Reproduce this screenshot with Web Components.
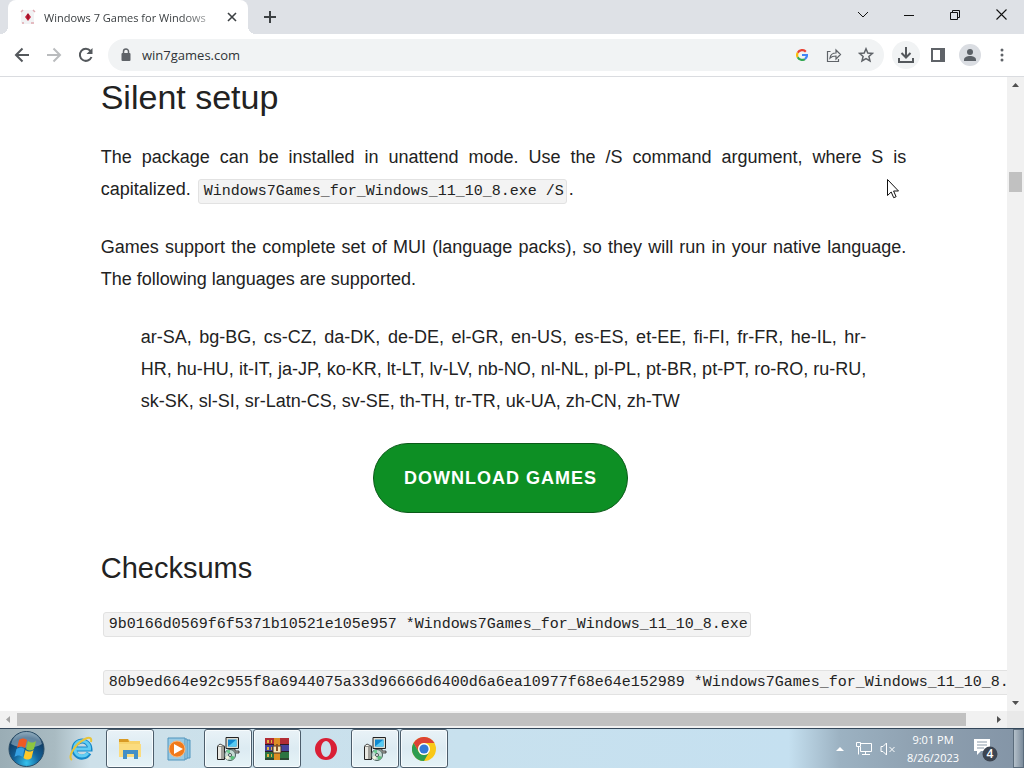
<!DOCTYPE html>
<html lang="en">
<head>
<meta charset="utf-8">
<title>Windows 7 Games for Windows</title>
<style>
html, body { height: 100%; margin: 0; }
body { display: flex; flex-direction: column; overflow: hidden; font-family: "Liberation Sans", Arial, sans-serif; background: #fff; }
</style>
</head>
<body>
<tab-strip></tab-strip>
<browser-toolbar></browser-toolbar>
<page-viewport>
  <article-page></article-page>
</page-viewport>
<desktop-taskbar></desktop-taskbar>
<mouse-pointer></mouse-pointer>

<script>
function define(name, html) {
  const t = document.createElement('template');
  t.innerHTML = html;
  customElements.define(name, class extends HTMLElement {
    constructor() {
      super();
      this.attachShadow({ mode: 'open' }).appendChild(t.content.cloneNode(true));
    }
  });
}

const reset = `
:host, *, *::before, *::after { box-sizing: border-box; }
button { border: 0; padding: 0; margin: 0; background: none; color: inherit; font: inherit; display: grid; place-items: center; }
svg { display: block; }`;

define('tab-strip', `
<style>${reset}
:host { display: flex; flex: none; height: 34px; background: #dee1e6; font: 11px "Open Sans", "Noto Sans", sans-serif; color: #3c4043; padding-left: 8px; }
.tab { display: flex; align-items: center; width: 240px; background: #fff; border-radius: 8px 8px 0 0; padding: 0 8px 0 12px; position: relative; }
.tab::before, .tab::after { content: ""; position: absolute; bottom: 0; width: 8px; height: 8px; }
.tab::before { left: -8px; background: radial-gradient(circle at 0 0, transparent 8px, #fff 8px); }
.tab::after { right: -8px; background: radial-gradient(circle at 100% 0, transparent 8px, #fff 8px); }
.title { flex: 1; margin-left: 8px; white-space: nowrap; overflow: hidden; -webkit-mask-image: linear-gradient(90deg, #000 80%, rgba(0,0,0,.4) 96%); mask-image: linear-gradient(90deg, #000 80%, rgba(0,0,0,.4) 96%); }
.close { width: 16px; height: 16px; margin-left: 8px; }
.new { width: 28px; margin-left: 8px; }
.window { display: flex; margin-left: auto; height: 29px; color: #111; }
.window button { width: 46px; }
</style>
<div class="tab">
  <svg width="16" height="16" viewBox="0 0 16 16"><rect x="1" y="1" width="13" height="14" rx="2" fill="#f1f2f4"/><path d="M1 3l2-2M13 1l2 2M11 14l3 0M2 14l2 0" stroke="#dfa9b0" stroke-width="1.5"/><path d="M8 4l3 4-3 4-3-4z" fill="#c71f37"/><path d="M8 5v5" stroke="#7c0b23"/></svg>
  <span class="title">Windows 7 Games for Windows</span>
  <button class="close" aria-label="Close tab"><svg width="10" height="10" viewBox="0 0 10 10" stroke="#3c4043" stroke-width="1.6"><path d="M1 1l8 8M9 1L1 9"/></svg></button>
</div>
<button class="new" aria-label="New tab"><svg width="14" height="14" viewBox="0 0 14 14" stroke="#3c4043" stroke-width="2"><path d="M7 1v12M1 7h12"/></svg></button>
<div class="window">
  <button aria-label="Search tabs"><svg width="12" height="8" viewBox="0 0 12 8" fill="none" stroke="currentColor"><path d="M1 1l5 5 5-5"/></svg></button>
  <button aria-label="Minimize"><svg width="10" height="10" viewBox="0 0 10 10" stroke="currentColor"><path d="M0 5.500h10"/></svg></button>
  <button aria-label="Restore"><svg width="10" height="10" viewBox="0 0 10 10" fill="none" stroke="currentColor"><path d="M.5 2.500h7v7h-7zM2.500 2.500v-2h7v7h-2"/></svg></button>
  <button aria-label="Close"><svg width="11" height="11" viewBox="0 0 11 11" stroke="currentColor" stroke-width="1.100"><path d="M.5.500l10 10M10.500.500l-10 10"/></svg></button>
</div>`);

define('browser-toolbar', `
<style>${reset}
:host { display: flex; flex: none; align-items: center; height: 43px; padding: 0 6px; background: #fff; border-bottom: 1px solid #dadce0; font: 13px "Open Sans", "Noto Sans", sans-serif; color: #5f6368; }
button { width: 32px; height: 28px; }
.box { flex: 1; display: flex; align-items: center; height: 32px; margin: 0 8px 0 6px; padding: 0 2px 0 10px; border-radius: 16px; background: #f1f3f4; }
input { flex: 1; min-width: 0; border: 0; outline: 0; padding: 0; margin-left: 8px; background: none; font: 13px "Open Sans", "Noto Sans", sans-serif; color: #303337; }
.box > svg { flex: none; }
.dl { width: 28px; border-radius: 50%; background: #f1f3f4; margin-right: 2px; }
</style>
<button aria-label="Back"><svg width="16" height="16" viewBox="0 0 16 16" fill="none" stroke="#54585c" stroke-width="2"><path d="M15 8H2M8.500 1.500L2 8l6.500 6.500"/></svg></button>
<button aria-label="Forward"><svg width="16" height="16" viewBox="0 0 16 16" fill="none" stroke="#babcbe" stroke-width="2"><path d="M1 8h13M7.500 1.500L14 8l-6.500 6.500"/></svg></button>
<button aria-label="Reload"><svg width="16" height="16" viewBox="0 0 16 16" fill="none" stroke="#54585c" stroke-width="2"><path d="M13.500 10A6 6 0 1 1 12.500 4"/><path d="M14.500 1v6h-6z" fill="#54585c" stroke="none"/></svg></button>
<div class="box">
  <svg width="16" height="16" viewBox="0 0 16 16"><rect x="3.500" y="6" width="9" height="8" rx="1" fill="#5f6368"/><path d="M5.500 7V4.500a2.500 2.500 0 0 1 5 0V7" fill="none" stroke="#5f6368" stroke-width="1.500"/></svg>
  <input type="text" value="win7games.com" aria-label="Address">
  <button aria-label="Google"><svg width="12" height="12" viewBox="0 0 12 12" fill="none" stroke-width="2.200"><path d="M9.800 2.700A5 5 0 0 0 1.700 3.700" stroke="#ea4335"/><path d="M1.700 3.700a5 5 0 0 0 0 4.600" stroke="#fbbc05"/><path d="M1.700 8.300a5 5 0 0 0 7.200 1.800" stroke="#34a853"/><path d="M8.900 10.100A5 5 0 0 0 11 6H6" stroke="#4285f4"/></svg></button>
  <button aria-label="Share"><svg width="16" height="16" viewBox="0 0 16 16" fill="none" stroke="currentColor" stroke-width="1.200"><path d="M4.500 4.500h-3v10h11V12M4 11c.5-3.500 2.500-5 6-5V3l4.500 4.500L10 12V9c-3 0-4.500.5-6 2z"/></svg></button>
  <button aria-label="Bookmark"><svg width="16" height="16" viewBox="0 0 16 16" fill="none" stroke="currentColor" stroke-width="1.500"><path d="M8 1.800l1.800 4.200 4.600.400-3.500 3 1.100 4.500L8 11.500l-4 2.400 1.100-4.500-3.500-3L6.200 6z"/></svg></button>
</div>
<button class="dl" aria-label="Downloads"><svg width="16" height="16" viewBox="0 0 16 16" fill="none" stroke="#54585c" stroke-width="2"><path d="M8 0v10M3.500 6L8 10.500 12.500 6M1 11v4h14v-4"/></svg></button>
<button aria-label="Side panel"><svg width="14" height="14" viewBox="0 0 14 14"><path fill="#5f6368" fill-rule="evenodd" d="M0 0h14v14H0zM2 2v10h7V2z"/></svg></button>
<button aria-label="Profile"><svg width="22" height="22" viewBox="0 0 22 22"><circle cx="11" cy="11" r="11" fill="#dadde2"/><circle cx="11" cy="8" r="3" fill="#5b6066"/><path d="M5 16c0-3 3-4 6-4s6 1 6 4v1H5z" fill="#5b6066"/></svg></button>
<button aria-label="Menu"><svg width="4" height="14" viewBox="0 0 4 14" fill="#5f6368"><circle cx="2" cy="2" r="1.500"/><circle cx="2" cy="7" r="1.500"/><circle cx="2" cy="12" r="1.500"/></svg></button>`);

define('scroll-bar', `
<style>${reset}
:host { display: flex; background: #f1f1f1; color: #505050; }
:host([axis="y"]) { flex-direction: column; width: 17px; }
:host([axis="x"]) { height: 17px; }
button { width: 17px; height: 17px; flex: none; }
.track { flex: 1; display: flex; flex-direction: inherit; }
.thumb { background: #c1c1c1; }
:host([axis="y"]) .thumb { margin: 0 2px; height: 20px; }
:host([axis="y"]) .track { padding-top: 78px; }
:host([axis="x"]) .thumb { margin: 2px 0; width: 97.500%; }
svg { width: 7px; height: 7px; fill: currentColor; }
:host([axis="y"]) svg { transform: rotate(90deg); }
:host([axis="x"]) button:first-of-type { color: #a3a3a3; }
</style>
<button aria-label="Scroll back"><svg viewBox="0 0 7 7"><path d="M5 0v7L1 3.500z"/></svg></button>
<div class="track"><div class="thumb"></div></div>
<button aria-label="Scroll forward"><svg viewBox="0 0 7 7"><path d="M2 0v7l4-3.500z"/></svg></button>`);

define('page-viewport', `
<style>${reset}
:host { flex: 1; min-height: 0; display: grid; grid-template: minmax(0, 1fr) 17px / minmax(0, 1fr) 17px; background: #fff; }
.view { overflow: hidden; }
.corner { background: #e9e9e9; }
</style>
<div class="view"><slot></slot></div>
<scroll-bar axis="y"></scroll-bar>
<scroll-bar axis="x"></scroll-bar>
<div class="corner"></div>`);

define('code-chip', `
<style>
:host { display: inline-block; margin: 0 2px; }
code { display: block; padding: 3px 2px 3px 5px; border: 1px solid #e2e2e2; border-radius: 3px; background: #f3f3f3; color: #222; font: 15px/17px "Liberation Mono", monospace; white-space: nowrap; }
</style><code><slot></slot></code>`);

define('article-page', `
<style>${reset}
:host { display: block; padding: 0 10%; color: #222; font-size: 18px; line-height: 32px; }
h1, h2 { margin: 0; font-weight: 400; line-height: 40px; }
h1 { font-size: 34px; }
h2 { font-size: 29px; margin-top: 35px; }
p { margin: 26px 0 0; text-align: justify; }
h1 + p { margin-top: 24px; }
h2 + p { margin-top: 18px; }
blockquote { margin: 26px 40px 0; text-align: justify; }
.action { display: flex; justify-content: center; margin: 26px 6px 0 0; }
.action a { display: block; padding: 18px 30px; border: 1px solid #0a5a18; border-radius: 35px; background: #0d8f24; color: #fff; font-weight: 700; letter-spacing: 1px; text-decoration: none; }
</style>
<h1>Silent setup</h1>
<p>The package can be installed in unattend mode. Use the /S command argument, where S is capitalized. <code-chip>Windows7Games_for_Windows_11_10_8.exe /S</code-chip>.</p>
<p>Games support the complete set of MUI (language packs), so they will run in your native language. The following languages are supported.</p>
<blockquote>ar-SA, bg-BG, cs-CZ, da-DK, de-DE, el-GR, en-US, es-ES, et-EE, fi-FI, fr-FR, he-IL, hr-HR, hu-HU, it-IT, ja-JP, ko-KR, lt-LT, lv-LV, nb-NO, nl-NL, pl-PL, pt-BR, pt-PT, ro-RO, ru-RU, sk-SK, sl-SI, sr-Latn-CS, sv-SE, th-TH, tr-TR, uk-UA, zh-CN, zh-TW</blockquote>
<div class="action"><a href="#download">DOWNLOAD GAMES</a></div>
<h2>Checksums</h2>
<p><code-chip>9b0166d0569f6f5371b10521e105e957 *Windows7Games_for_Windows_11_10_8.exe</code-chip></p>
<p><code-chip>80b9ed664e92c955f8a6944075a33d96666d6400d6a6ea10977f68e64e152989 *Windows7Games_for_Windows_11_10_8.exe</code-chip></p>`);

define('task-item', `
<style>${reset}
:host { display: block; width: 49px; height: 39px; }
button { width: 48px; height: 39px; border: 1px solid transparent; border-radius: 3px; }
:host([open]) button { border-color: #4c5d6b; background: linear-gradient(#e9f2f7, #dcebf2 50%, #e6f3f7); box-shadow: inset 0 0 0 1px #f6fbfd; }
</style><button><slot></slot></button>`);

define('setup-icon', `
<style>:host { display: block; } svg { display: block; }</style>
<svg width="24" height="24" viewBox="0 0 24 24"><path d="M10 .500h12.500v11H10z" fill="#dcdcd2" stroke="#222"/><path d="M12 2.500h8.500v7H12z" fill="#1089d0"/><path d="M12 9.500l8.500-7v7z" fill="#55caf2"/><path d="M14 12h5v2h4v2h-10z" fill="#c4c4bc" stroke="#222" stroke-width=".8"/><path d="M1.500 9.500h7v13h-7z" fill="#e8e8e2" stroke="#222"/><path d="M5 10h3v12H5z" fill="#a0a09a"/><path d="M1 9.500L4 7l5 2.500" fill="#f8f8ef" stroke="#222" stroke-width=".8"/><circle cx="14" cy="18" r="5.500" fill="#c4d9d3" stroke="#485e5b"/><path d="M14 18l-4-4a5 5 0 0 1 4-1z" fill="#6dce92"/><path d="M14 18l5 2a5 5 0 0 1-4 3z" fill="#5ac07b"/><path d="M14 18l-5 2a5 5 0 0 0 3 3z" fill="#f3f6df"/><circle cx="14" cy="18" r="1.500" fill="#fff" stroke="#455"/></svg>`);

define('desktop-taskbar', `
<style>${reset}
:host { display: flex; flex: none; height: 40px; border-top: 1px solid #33475a; color: #fff; font: 11px "Open Sans", "Noto Sans", sans-serif; background: linear-gradient(90deg, #9aadb5, #a9bbc2 55px, #cde0e9 90px, #c8e1ee 45%, #c5e0f0 77%, #9cb2c2 82%, #8ea0b0 90%, #8394a6); }
.start { width: 57px; padding-right: 4px; }
.apps { display: flex; }
.tray { display: flex; align-items: center; margin-left: auto; }
.tray button { height: 39px; }
.up, .net, .vol { width: 24px; }
.clock { width: 66px; text-align: center; line-height: 18px; }
.note { width: 40px; }
.tray .desk { width: 11px; margin-left: 7px; border: 1px solid #5b6c7c; background: linear-gradient(90deg, #b4c0ca, #7b8b9b); }
</style>
<button class="start" aria-label="Start"><svg width="37" height="38" viewBox="0 0 37 38"><defs><radialGradient id="orb" cx=".5" cy=".9" r=".9"><stop offset="0" stop-color="#35c3ee"/><stop offset=".4" stop-color="#14649b"/><stop offset=".8" stop-color="#103b63"/><stop offset="1" stop-color="#7896a9"/></radialGradient></defs><circle cx="18.500" cy="19" r="17.500" fill="url(#orb)" stroke="#294b64"/><path d="M3 14a16 16 0 0 1 31 0c-8 5-22 5-31 0z" fill="#a9c3d1" opacity=".55"/><path d="M11 10c3-2 5-2 8 0l-2 8c-3-2-5-2-8 0z" fill="#ef5a24"/><path d="M20 11c3 2 5 2 8 0l-2 8c-3 2-5 2-8 0z" fill="#8ec63f"/><path d="M8.500 19c3-2 5-2 8 0l-2 8c-3-2-5-2-8 0z" fill="#35a0e3"/><path d="M17.500 20c3 2 5 2 8 0l-2 8c-3 2-5 2-8 0z" fill="#fdc829"/></svg></button>
<div class="apps">
  <task-item><svg width="26" height="26" viewBox="0 0 26 26" fill="none"><path d="M21 17a8 8 0 1 1 1-4H8" stroke="#1688c9" stroke-width="5"/><path d="M20 17a7.500 7.500 0 1 1 1.500-4H8" stroke="#61cdf3" stroke-width="3"/><path d="M4 24c-5-3 3-16 13-21 5-2.500 7-1 6 3" stroke="#e8c43a" stroke-width="2"/></svg></task-item>
  <task-item open><svg width="24" height="22" viewBox="0 0 24 22"><path d="M1 1h9l2 2h10v16H1z" fill="#f7d36c"/><path d="M1 1h9l1 3H1z" fill="#d89a25"/><path d="M1 6h22v13H1z" fill="#fbdc7e"/><path d="M5 12h15v9h-4v-5H9v5H5z" fill="#438fc6"/></svg></task-item>
  <task-item><svg width="24" height="24" viewBox="0 0 24 24"><path d="M8 3h15v18H8z" fill="#8bc4e3" stroke="#5095bd"/><path d="M5 2h15v20H5z" fill="#b8dcec" stroke="#5095bd"/><path d="M1 1h17v22H1z" fill="#9bcbe4" stroke="#5095bd"/><circle cx="10" cy="12" r="8" fill="#f17a1b" stroke="#f7b77d"/><path d="M7 7l9 5-9 5z" fill="#fff"/></svg></task-item>
  <task-item open><setup-icon></setup-icon></task-item>
  <task-item open><svg width="24" height="22" viewBox="0 0 24 22"><path d="M0 0h24v7H0z" fill="#b22d35"/><path d="M0 7h24v7H0z" fill="#46439c"/><path d="M0 14h24v8H0z" fill="#2c7441"/><path d="M0 6.500h24M0 13.500h24M0 21h24" stroke="#2b1b25"/><path d="M2 2h2v3H2zM6 2h1v3H6zM2 9h2v3H2zM6 9h1v3H6zM2 16h2v3H2zM6 16h1v3H6z" fill="#e1b43f"/><path d="M9 0h6v22H9z" fill="#dd8e24"/><path d="M8 8h8v7H8z" fill="#f7e6b8" stroke="#4b3020"/><path d="M11 6h2v7h-2z" fill="#895326"/></svg></task-item>
  <task-item><svg width="24" height="24" viewBox="0 0 24 24"><path fill="#d91f35" fill-rule="evenodd" d="M12 1a11 11 0 1 0 0 22 11 11 0 0 0 0-22zm0 3c3 0 5 4 5 8s-2 8-5 8-5-4-5-8 2-8 5-8z"/></svg></task-item>
  <task-item open><setup-icon></setup-icon></task-item>
  <task-item open><svg width="24" height="24" viewBox="0 0 24 24"><circle cx="12" cy="12" r="12" fill="#f9c817"/><path d="M1.600 6A12 12 0 0 1 22.400 6H12a6 6 0 0 0-5.200 9z" fill="#dc4335"/><path d="M1.600 6A12 12 0 0 0 12 24l5.200-9a6 6 0 0 1-10.400 0z" fill="#2c9d50"/><circle cx="12" cy="12" r="6" fill="#fff"/><circle cx="12" cy="12" r="4.600" fill="#3279d7"/></svg></task-item>
</div>
<div class="tray">
  <button class="up" aria-label="Show hidden icons"><svg width="8" height="5" viewBox="0 0 8 5" fill="#fff"><path d="M0 5l4-4 4 4z"/></svg></button>
  <button class="net" aria-label="Network"><svg width="17" height="15" viewBox="0 0 17 15" fill="none" stroke="#fff"><path d="M5 2.500h10.500v8h-11V6M9.500 10.500v3M6 13.500h8M.5 1.500h4v4h-4zM2.500 5.500v8"/></svg></button>
  <button class="vol" aria-label="Volume muted"><svg width="16" height="14" viewBox="0 0 16 14" fill="none" stroke="#fff"><path d="M1 4.500h2L6.500 1v12L3 9.500H1zM9.500 5l5 5M14.500 5l-5 5"/></svg></button>
  <button class="clock"><span>9:01 PM<br>8/26/2023</span></button>
  <button class="note" aria-label="Notifications"><svg width="26" height="26" viewBox="0 0 26 26"><path d="M1 3h16v12H8l-4 4v-4H1z" fill="#fff"/><path d="M4 6h10M4 9h10M4 12h7" stroke="#8999a8"/><circle cx="17" cy="18" r="7.500" fill="#3c4450"/><text x="17" y="22" text-anchor="middle" font-family="Open Sans" font-size="12" font-weight="600" fill="#fff">4</text></svg></button>
  <button class="desk" aria-label="Show desktop"></button>
</div>`);

define('mouse-pointer', `
<style>:host { position: absolute; left: 887px; top: 179px; pointer-events: none; } svg { display: block; }</style>
<svg width="12" height="20" viewBox="0 0 12 20"><path d="M.5.500v16l3.700-3.500 2.500 5.700 2.400-1L6.600 12h4.900z" fill="#fff" stroke="#111"/></svg>`);
</script>
</body>
</html>
